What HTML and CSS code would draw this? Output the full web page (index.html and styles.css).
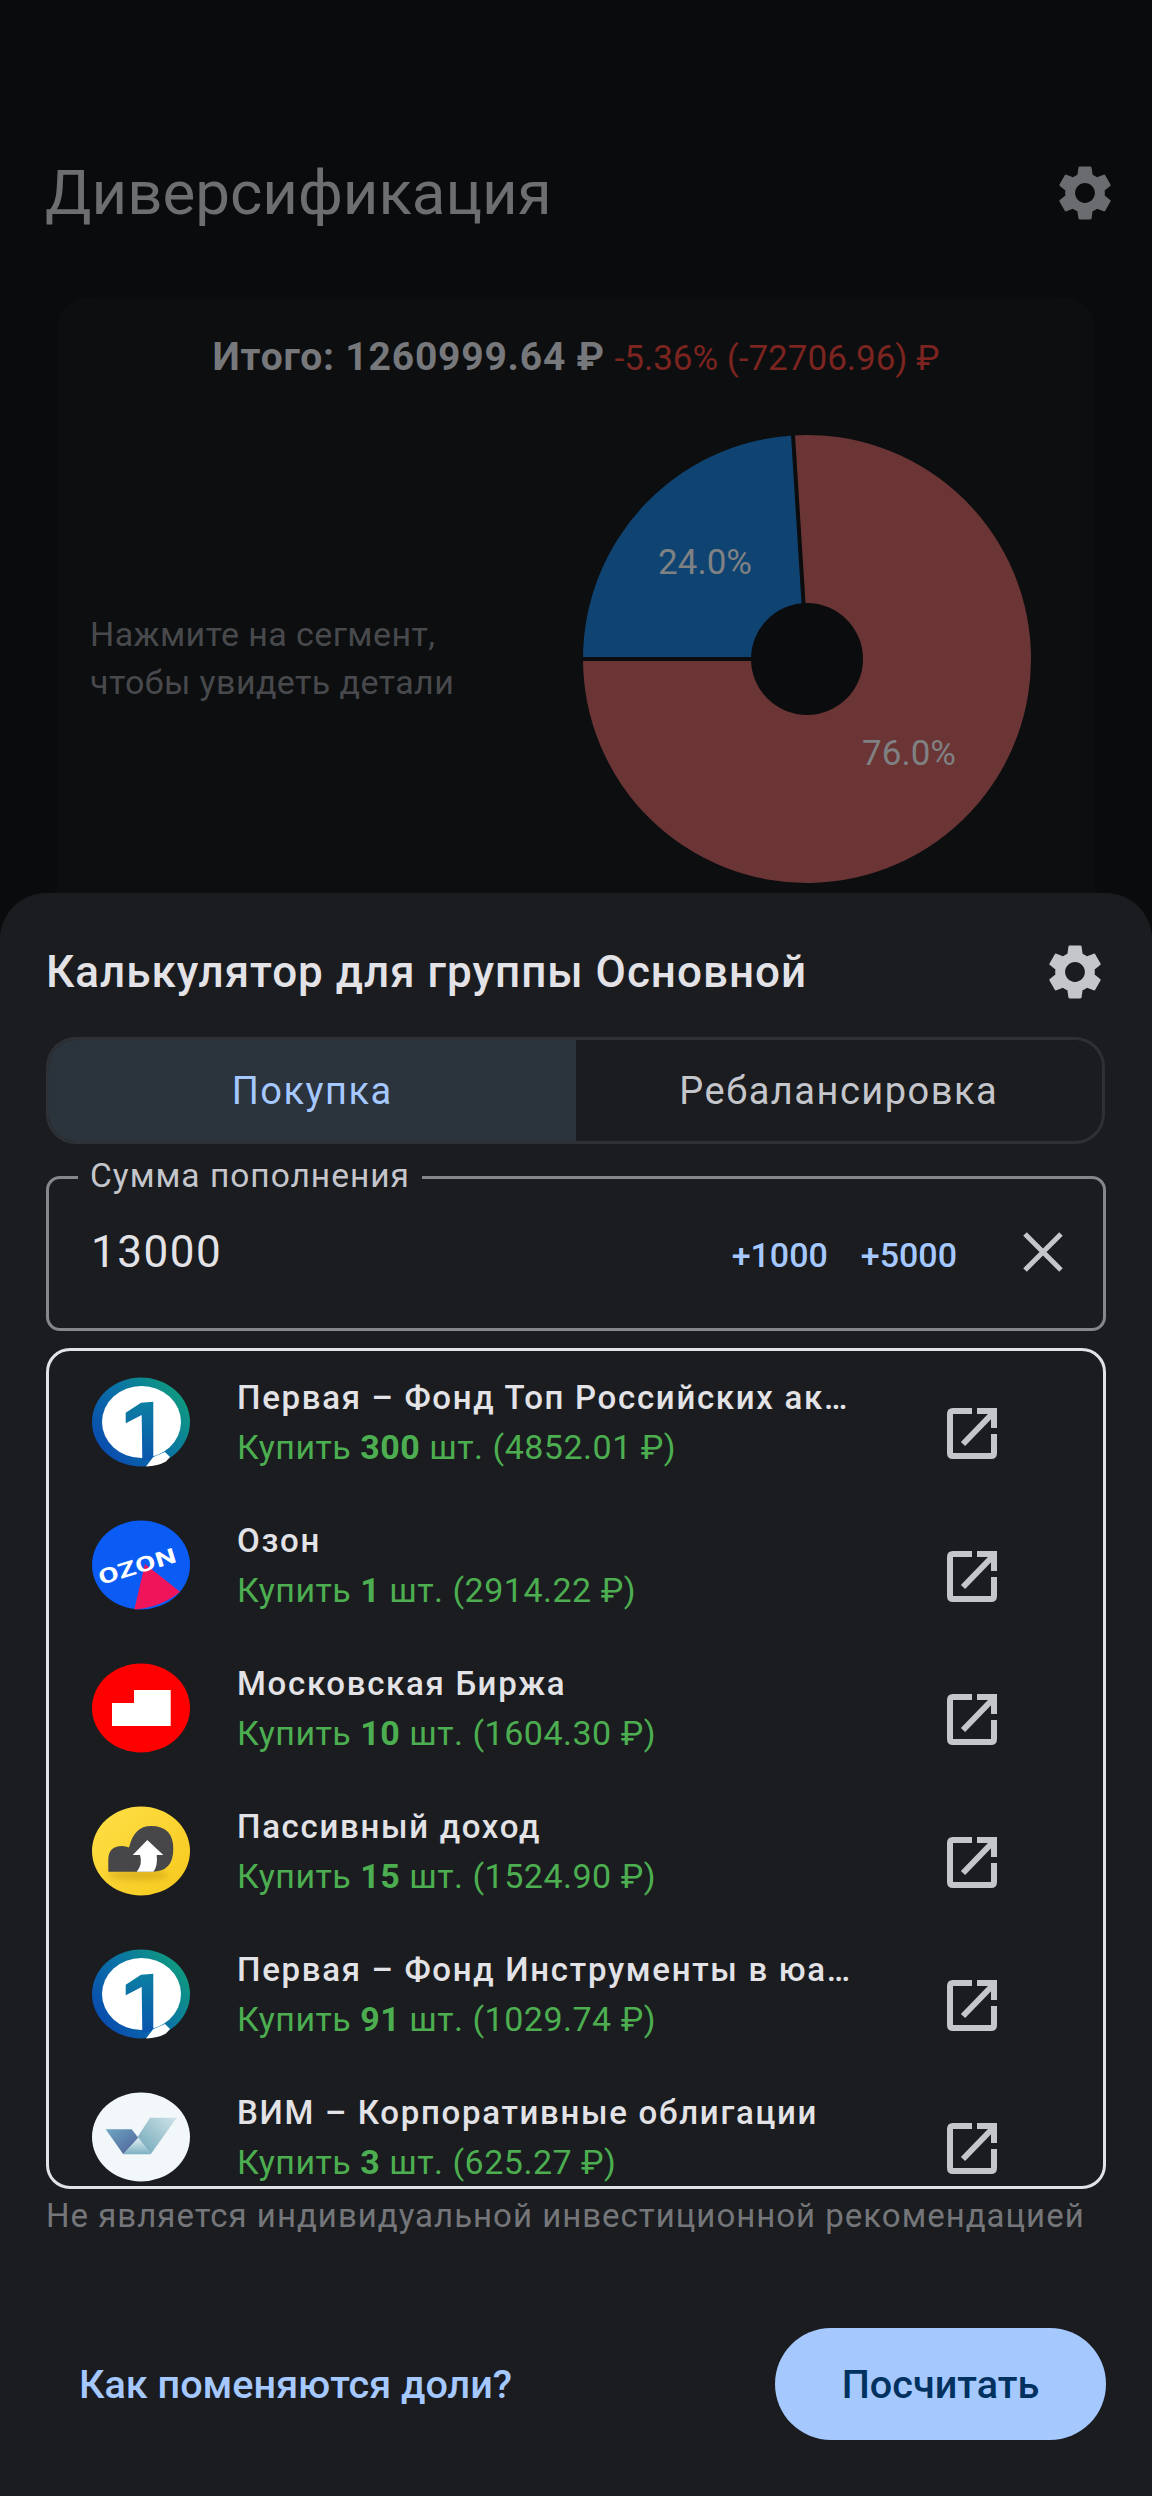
FILE: index.html
```html
<!DOCTYPE html>
<html lang="ru">
<head>
<meta charset="utf-8">
<title>Диверсификация</title>
<link rel="stylesheet" href="styles.css">
</head>
<body>
<svg class="defs" width="0" height="0" aria-hidden="true">
  <defs>
    <path id="gear" d="M19.14 12.94c.04-.3.06-.61.06-.94 0-.32-.02-.64-.07-.94l2.03-1.58a.49.49 0 0 0 .12-.61l-1.92-3.32a.488.488 0 0 0-.59-.22l-2.39.96c-.5-.38-1.03-.7-1.62-.94l-.36-2.54a.484.484 0 0 0-.48-.41h-3.84c-.24 0-.43.17-.47.41l-.36 2.54c-.59.24-1.13.57-1.62.94l-2.39-.96a.49.49 0 0 0-.59.22L2.74 8.87c-.12.21-.08.47.12.61l2.03 1.58c-.05.3-.09.63-.09.94s.02.64.07.94l-2.03 1.58a.49.49 0 0 0-.12.61l1.92 3.32c.12.22.37.29.59.22l2.39-.96c.5.38 1.03.7 1.62.94l.36 2.54c.05.24.24.41.48.41h3.84c.24 0 .44-.17.47-.41l.36-2.54c.59-.24 1.13-.56 1.62-.94l2.39.96c.22.08.47 0 .59-.22l1.92-3.32c.12-.22.07-.47-.12-.61l-2.01-1.58zM12 15.6c-1.98 0-3.6-1.62-3.6-3.6s1.62-3.6 3.6-3.6 3.6 1.62 3.6 3.6-1.62 3.6-3.6 3.6z"/>
    <linearGradient id="ringGrad" x1="0" y1="0.85" x2="1" y2="0.15">
      <stop offset="0" stop-color="#0a45b0"/>
      <stop offset="0.5" stop-color="#0a72a6"/>
      <stop offset="1" stop-color="#10a078"/>
    </linearGradient>
    <linearGradient id="oneGrad" x1="0" y1="0" x2="0" y2="1">
      <stop offset="0" stop-color="#0c7fa2"/>
      <stop offset="1" stop-color="#0a55ae"/>
    </linearGradient>
    <linearGradient id="yellowGrad" x1="0" y1="0" x2="1" y2="1">
      <stop offset="0" stop-color="#ffe048"/>
      <stop offset="1" stop-color="#f6c81c"/>
    </linearGradient>
    <linearGradient id="vimLeft" x1="0" y1="0" x2="1" y2="1">
      <stop offset="0" stop-color="#6fa6c2"/>
      <stop offset="1" stop-color="#4c5f97"/>
    </linearGradient>
    <linearGradient id="vimMid" x1="0" y1="0" x2="0" y2="1">
      <stop offset="0" stop-color="#e2eef0"/>
      <stop offset="1" stop-color="#7cb0c4"/>
    </linearGradient>
    <linearGradient id="vimRight" x1="1" y1="0" x2="0" y2="1">
      <stop offset="0" stop-color="#cfe3e8"/>
      <stop offset="1" stop-color="#6ea6b8"/>
    </linearGradient>
    <g id="logoFirst">
      <ellipse cx="49" cy="45" rx="49" ry="44.5" fill="url(#ringGrad)"/>
      <ellipse cx="49.5" cy="45" rx="39.5" ry="36" fill="#fff"/>
      <path d="M33.7 35.7 L49 25.7 L61.3 24.7 V82 L50.3 84 L49.7 38 L33.7 46.3 Z" fill="url(#oneGrad)"/>
      <path d="M61.3 80 L54 89.5 Q66 89 74 84.5 L78 80 L73 75 Z" fill="#fff"/>
    </g>
    <g id="openIcon" class="open-stroke">
      <path d="M25 3 H6 Q3 3 3 6 V45 Q3 48 6 48 H44 Q47 48 47 45 V26"/>
      <path d="M16 36 L46 5"/>
      <path d="M30 3 H47 V20"/>
    </g>
  </defs>
</svg>

<main class="screen">
  <div class="backdrop">
    <header class="top-bar">
      <h1 class="page-title">Диверсификация</h1>
      <svg class="gear gear-dim" viewBox="0 0 24 24"><use href="#gear"/></svg>
    </header>
    <section class="card">
      <p class="total"><b>Итого: 1260999.64 ₽</b> <span class="loss">-5.36% (-72706.96) ₽</span></p>
      <div class="chart-row">
        <p class="hint">Нажмите на сегмент,<br>чтобы увидеть детали</p>
        <svg class="pie" viewBox="0 0 452 452">
          <path class="seg-red" d="M212 2.4 A224 224 0 1 1 2 226 L226 226 Z"/>
          <path class="seg-blue" d="M2 226 A224 224 0 0 1 212 2.4 L226 226 Z"/>
          <path class="seg-gap" d="M2 226 H226 L212 2"/>
          <circle class="seg-hole" cx="226" cy="226" r="56"/>
          <text class="pie-label" x="124" y="141" text-anchor="middle">24.0%</text>
          <text class="pie-label" x="328" y="332" text-anchor="middle">76.0%</text>
        </svg>
      </div>
    </section>
  </div>

  <section class="sheet">
    <header class="sheet-head">
      <h2 class="sheet-title">Калькулятор для группы Основной</h2>
      <svg class="gear gear-bright" viewBox="0 0 24 24"><use href="#gear"/></svg>
    </header>

    <div class="tabs">
      <div class="tab tab-on">Покупка</div>
      <div class="tab">Ребалансировка</div>
    </div>

    <div class="field">
      <span class="field-label">Сумма пополнения</span>
      <span class="field-value">13000</span>
      <span class="chip">+1000</span>
      <span class="chip">+5000</span>
      <svg class="clear" viewBox="0 0 40 40"><path d="M2 2 L38 38 M38 2 L2 38"/></svg>
    </div>

    <div class="list">
      <div class="row">
        <svg class="logo" viewBox="0 0 98 90"><use href="#logoFirst"/></svg>
        <div class="row-text">
          <div class="row-name">Первая – Фонд Топ Российских ак…</div>
          <div class="row-buy">Купить <b>300</b> шт. (4852.01 ₽)</div>
        </div>
        <svg class="open" viewBox="0 0 50 51"><use href="#openIcon"/></svg>
      </div>
      <div class="row">
        <svg class="logo" viewBox="0 0 98 90">
          <ellipse cx="49" cy="45" rx="49" ry="44.5" fill="#0a5cf5"/>
          <path d="M53 44 L88 71.7 Q70 87 42.3 89.5 Z" fill="#f0145a"/>
          <text class="logo-ozon" transform="translate(9 65) rotate(-17) scale(1.4 1)" fill="#fff">OZON</text>
        </svg>
        <div class="row-text">
          <div class="row-name">Озон</div>
          <div class="row-buy">Купить <b>1</b> шт. (2914.22 ₽)</div>
        </div>
        <svg class="open" viewBox="0 0 50 51"><use href="#openIcon"/></svg>
      </div>
      <div class="row">
        <svg class="logo" viewBox="0 0 98 90">
          <ellipse cx="49" cy="45" rx="49" ry="44.5" fill="#fe0000"/>
          <path d="M20 63 V40 H42 V27 H78.7 V63 Z" fill="#fff"/>
        </svg>
        <div class="row-text">
          <div class="row-name">Московская Биржа</div>
          <div class="row-buy">Купить <b>10</b> шт. (1604.30 ₽)</div>
        </div>
        <svg class="open" viewBox="0 0 50 51"><use href="#openIcon"/></svg>
      </div>
      <div class="row">
        <svg class="logo" viewBox="0 0 98 90">
          <ellipse cx="49" cy="45" rx="49" ry="44.5" fill="url(#yellowGrad)"/>
          <ellipse class="logo-shadow" cx="46" cy="69" rx="30" ry="5"/>
          <path d="M16.3 65.7 V54 Q16.3 40 30 40 Q34 40 37 41.5 Q42 20 59 20 Q81.3 20 81.3 43 Q81.3 65.7 60 65.7 Z" fill="#47474a"/>
          <path d="M44.7 65.7 Q51 58 48 49 H40.7 L55.3 34 L71.3 49 H64.7 Q66 60 61.3 65.7 Z" fill="#fff"/>
        </svg>
        <div class="row-text">
          <div class="row-name">Пассивный доход</div>
          <div class="row-buy">Купить <b>15</b> шт. (1524.90 ₽)</div>
        </div>
        <svg class="open" viewBox="0 0 50 51"><use href="#openIcon"/></svg>
      </div>
      <div class="row">
        <svg class="logo" viewBox="0 0 98 90"><use href="#logoFirst"/></svg>
        <div class="row-text">
          <div class="row-name">Первая – Фонд Инструменты в юа…</div>
          <div class="row-buy">Купить <b>91</b> шт. (1029.74 ₽)</div>
        </div>
        <svg class="open" viewBox="0 0 50 51"><use href="#openIcon"/></svg>
      </div>
      <div class="row">
        <svg class="logo" viewBox="0 0 98 90">
          <ellipse cx="49" cy="45" rx="49" ry="44.5" fill="#f2f7f9"/>
          <path d="M13.7 37.3 H39.7 L46.3 45.7 L31.3 62.3 Z" fill="url(#vimLeft)"/>
          <path d="M31.3 62.3 L46.3 45.7 L58.7 62.3 Z" fill="url(#vimMid)"/>
          <path d="M58 25.7 H84.7 L58.7 62.3 L45.7 44.7 Z" fill="url(#vimRight)"/>
        </svg>
        <div class="row-text">
          <div class="row-name">ВИМ – Корпоративные облигации</div>
          <div class="row-buy">Купить <b>3</b> шт. (625.27 ₽)</div>
        </div>
        <svg class="open" viewBox="0 0 50 51"><use href="#openIcon"/></svg>
      </div>
    </div>

    <p class="disclaimer">Не является индивидуальной инвестиционной рекомендацией</p>

    <footer class="actions">
      <span class="link">Как поменяются доли?</span>
      <span class="primary">Посчитать</span>
    </footer>
  </section>
</main>
</body>
</html>
```

FILE: styles.css
```css
* { box-sizing: border-box; margin: 0; padding: 0; }
html, body { background: #0a0b0d; }
body { font-family: Roboto, "Noto Sans", sans-serif; width: 1152px; height: 2496px; overflow: hidden; }
.defs { position: absolute; }

.screen { position: relative; width: 1152px; height: 2496px; overflow: hidden; background: #0a0b0d; }

.backdrop { padding: 155px 34px 0 45px; }
.top-bar { display: flex; justify-content: space-between; align-items: center; height: 76px; }
.page-title { font-size: 61.8px; font-weight: 400; color: #6d6e71; line-height: 76px; }
.gear { display: block; fill: currentColor; }
.gear-dim { width: 66px; height: 66px; color: #6b6c70; }

.card { margin: 66px 23px 0 12px; height: 700px; border-radius: 32px; background: #0d0e10; padding-top: 35px; }
.total { font-size: 39px; line-height: 50px; text-align: center; color: #77787b; white-space: nowrap; }
.total b { font-weight: 700; letter-spacing: 0.8px; }
.loss { font-size: 35px; color: #7c241f; letter-spacing: 0; }
.chart-row { display: flex; justify-content: space-between; align-items: center; padding: 0 0 0 33px; margin-top: 49px; }
.hint { font-size: 34px; line-height: 48px; margin-bottom: 3px; color: #48494c; letter-spacing: 0.4px; }
.pie { width: 452px; height: 452px; flex: none; margin-right: 62px; }
.seg-red { fill: #6b3535; }
.seg-blue { fill: #0f4472; }
.seg-gap { fill: none; stroke: #0b0c0e; stroke-width: 4px; }
.seg-hole { fill: #0b0c0e; }
.pie-label { font-size: 35px; fill: #7f8183; }

.sheet { position: absolute; left: 0; right: 0; top: 893px; bottom: 0; background: #1a1c1f; border-radius: 46px 46px 0 0; padding: 0 46px; }
.sheet-head { display: flex; justify-content: space-between; align-items: center; height: 158px; padding-right: 1px; }
.sheet-title { font-size: 44px; font-weight: 500; color: #e3e3e7; letter-spacing: 1px; }
.gear-bright { width: 66px; height: 66px; color: #c4c6cc; margin-right: -3px; }

.tabs { display: flex; height: 107px; border: 3px solid #2d3035; border-radius: 30px; overflow: hidden; margin-top: -14px; margin-right: 1px; }
.tab { flex: 1; display: flex; align-items: center; justify-content: center; font-size: 38px; letter-spacing: 1.5px; color: #c4c6cc; }
.tab-on { background: #2b333d; color: #a5c8ff; }

.field { position: relative; display: flex; align-items: center; height: 155px; margin-top: 32px; padding: 0 40px 4px 42px; border: 3px solid #85878c; border-radius: 14px; gap: 33px; }
.field-label { position: absolute; left: 29px; top: -21px; padding: 0 12px; background: #1a1c1f; font-size: 33.5px; line-height: 36px; letter-spacing: 1px; color: #c4c6cc; }
.field-value { font-size: 44px; letter-spacing: 1.5px; color: #e3e3e7; margin-right: auto; }
.chip { font-size: 34px; font-weight: 500; color: #a5c8ff; position: relative; top: 3px; }
.clear { width: 40px; height: 40px; margin-left: 33px; fill: none; stroke: #c4c6cc; stroke-width: 5px; }

.list { height: 841px; margin-top: 17px; border: 3px solid #e3e3e7; border-radius: 24px; overflow: hidden; padding: 26px 0 0 43px; }
.row { display: flex; align-items: flex-start; height: 143px; }
.logo { width: 98px; height: 90px; flex: none; }
.logo-ozon { font-family: Roboto, sans-serif; font-size: 21px; font-weight: 700; letter-spacing: 0.4px; }
.logo-shadow { fill: #b88f10; opacity: 0.45; filter: blur(3px); }
.row-text { width: 757px; flex: none; padding-left: 47px; }
.row-name { font-size: 33px; line-height: 42px; font-weight: 500; letter-spacing: 1.7px; color: #e3e3e7; white-space: nowrap; }
.row-buy { font-size: 34px; line-height: 46px; margin-top: 5px; letter-spacing: 0.5px; color: #4cae50; white-space: nowrap; }
.row-buy b { font-weight: 700; }
.open { width: 50px; height: 51px; flex: none; margin-top: 31px; }
.open-stroke { fill: none; stroke: #c4c6cc; stroke-width: 6px; }

.disclaimer { margin-top: 5px; font-size: 33px; line-height: 44px; letter-spacing: 1px; color: #74767a; white-space: nowrap; }

.actions { display: flex; justify-content: space-between; align-items: center; margin-top: 90px; padding-left: 33px; }
.link { font-size: 39.6px; font-weight: 500; color: #a5c8ff; }
.primary { display: flex; align-items: center; justify-content: center; width: 331px; height: 112px; border-radius: 56px; background: #a5c9ff; color: #00315f; font-size: 39.6px; font-weight: 500; }
```
